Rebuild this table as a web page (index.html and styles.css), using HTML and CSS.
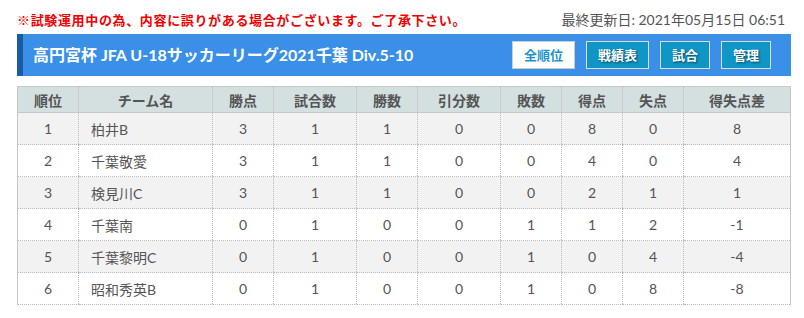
FILE: index.html
```html
<!DOCTYPE html>
<html lang="ja">
<head>
<meta charset="utf-8">
<title>順位表</title>
<link rel="stylesheet" href="styles.css">
</head>
<body>
<div class="page">
  <div class="topline">
    <p class="notice">※試験運用中の為、内容に誤りがある場合がございます。ご了承下さい。</p>
    <p class="updated">最終更新日: 2021年05月15日 06:51</p>
  </div>
  <div class="titlebar">
    <h1 class="title">高円宮杯 JFA U-18サッカーリーグ2021千葉 Div.5-10</h1>
    <nav class="btns">
      <a class="btn btn-active">全順位</a>
      <a class="btn">戦績表</a>
      <a class="btn">試合</a>
      <a class="btn">管理</a>
    </nav>
  </div>
  <table class="standings">
    <colgroup>
      <col class="c-rank"><col class="c-team"><col class="c-n"><col class="c-w"><col class="c-n"><col class="c-w"><col class="c-n"><col class="c-n"><col class="c-n"><col class="c-diff">
    </colgroup>
    <thead>
      <tr><th>順位</th><th>チーム名</th><th>勝点</th><th>試合数</th><th>勝数</th><th>引分数</th><th>敗数</th><th>得点</th><th>失点</th><th>得失点差</th></tr>
    </thead>
    <tbody>
      <tr><td>1</td><td class="team">柏井B</td><td>3</td><td>1</td><td>1</td><td>0</td><td>0</td><td>8</td><td>0</td><td>8</td></tr>
      <tr><td>2</td><td class="team">千葉敬愛</td><td>3</td><td>1</td><td>1</td><td>0</td><td>0</td><td>4</td><td>0</td><td>4</td></tr>
      <tr><td>3</td><td class="team">検見川C</td><td>3</td><td>1</td><td>1</td><td>0</td><td>0</td><td>2</td><td>1</td><td>1</td></tr>
      <tr><td>4</td><td class="team">千葉南</td><td>0</td><td>1</td><td>0</td><td>0</td><td>1</td><td>1</td><td>2</td><td>-1</td></tr>
      <tr><td>5</td><td class="team">千葉黎明C</td><td>0</td><td>1</td><td>0</td><td>0</td><td>1</td><td>0</td><td>4</td><td>-4</td></tr>
      <tr><td>6</td><td class="team">昭和秀英B</td><td>0</td><td>1</td><td>0</td><td>0</td><td>1</td><td>0</td><td>8</td><td>-8</td></tr>
    </tbody>
  </table>
</div>
</body>
</html>
```

FILE: styles.css
```css
* { box-sizing: border-box; }
html, body { margin: 0; padding: 0; background: #fff; }
body {
  font-family: Lato, "Noto Sans CJK JP", sans-serif;
  color: #555;
}
.page {
  width: 774px;
  margin-left: 17px;
}
.topline {
  display: flex;
  justify-content: space-between;
  align-items: center;
  padding-top: 10px;
  height: 30px;
}
.notice {
  margin: 0;
  color: #f00000;
  font-weight: bold;
  font-size: 13px;
  letter-spacing: 0.65px;
  line-height: 20px;
}
.updated {
  margin: 0 6px 0 0;
  font-size: 14px;
  line-height: 20px;
  color: #555;
}
.titlebar {
  margin-top: 4px;
  height: 42px;
  background: #3a8fe7;
  border-left: 6px solid #165da6;
  display: flex;
  align-items: center;
  justify-content: space-between;
  padding: 0 20px 0 10px;
}
.title {
  margin: 0;
  color: #fff;
  font-size: 16px;
  font-weight: bold;
  line-height: 20px;
}
.btns {
  display: flex;
  gap: 11px;
}
.btn {
  display: block;
  height: 28px;
  line-height: 26px;
  padding: 0 11px;
  border: 1px solid #d8dde2;
  background: #0f95c6;
  color: #fff;
  font-size: 13px;
  font-weight: bold;
  text-shadow: 1px 1px 2px rgba(0,0,0,0.55);
}
.btn-active {
  background: #fff;
  color: #1995cc;
  border-color: #c9cdd2;
  text-shadow: none;
}
.standings {
  margin-top: 10px;
  width: 774px;
  border-collapse: collapse;
  table-layout: fixed;
  border-left: 1px solid #c8c8c8;
  border-right: 1px solid #c8c8c8;
  font-size: 14px;
}
.c-rank { width: 61px; }
.c-team { width: 134px; }
.c-n { width: 61px; }
.c-w { width: 83px; }
.c-diff { width: 107px; }
.standings th {
  height: 26px;
  background: #d4e0e0;
  color: #555;
  font-weight: bold;
  font-size: 14px;
  border-top: 1px solid #c8c8c8;
  border-bottom: 1px solid #c8c8c8;
  border-left: 1px dotted #bbb;
  padding: 0;
  text-align: center;
}
.standings td {
  height: 32px;
  padding: 0;
  text-align: center;
  border-left: 1px dotted #bbb;
  border-bottom: 1px dotted #bbb;
  color: #555;
}
.standings th:first-child, .standings td:first-child { border-left: 1px solid #c8c8c8; }
.standings td.team { text-align: left; padding-left: 12px; }
.standings tbody tr:nth-child(odd) td { background: #f2f2f2; }
.standings tbody tr:nth-child(even) td { background: #fff; }
```
